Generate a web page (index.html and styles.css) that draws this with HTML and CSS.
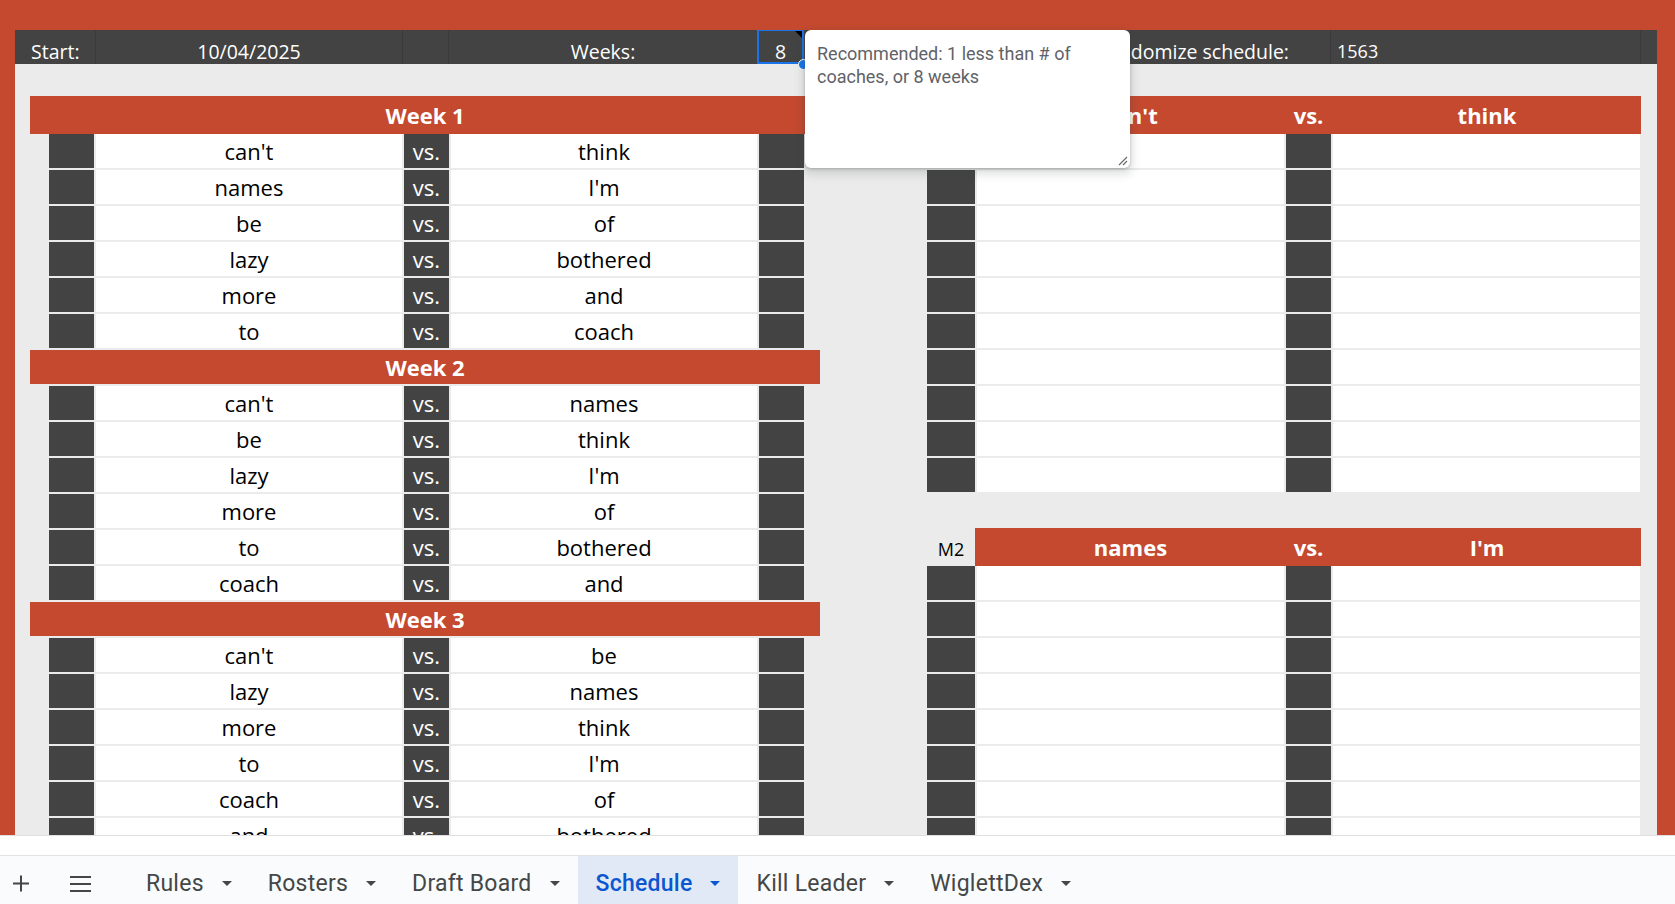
FILE: index.html
```html
<!DOCTYPE html>
<html>
<head>
<meta charset="utf-8">
<title>Schedule</title>
<link rel="stylesheet" href="styles.css">
</head>
<body>
<div class="app">
  <div class="frame">
    <div class="sheet">
      <div class="topbar">
        <div class="tcell c1">Start:</div>
        <div class="tcell c2">10/04/2025</div>
        <div class="tcell c3"></div>
        <div class="tcell c4">Weeks:</div>
        <div class="tcell c5">8<span class="sel-box"></span><span class="note-mark"></span><span class="handle"></span></div>
        <div class="tcell c6">Randomize schedule:</div>
        <div class="tcell c7">1563</div>
        <div class="tcell c8"></div>
      </div>
      <div class="content">
        <div class="left">
          <div class="week first">Week 1</div>
          <div class="row"><div class="cd"></div><div class="cw">can't</div><div class="cd vs">vs.</div><div class="cw">think</div><div class="cd"></div></div>
          <div class="row"><div class="cd"></div><div class="cw">names</div><div class="cd vs">vs.</div><div class="cw">I'm</div><div class="cd"></div></div>
          <div class="row"><div class="cd"></div><div class="cw">be</div><div class="cd vs">vs.</div><div class="cw">of</div><div class="cd"></div></div>
          <div class="row"><div class="cd"></div><div class="cw">lazy</div><div class="cd vs">vs.</div><div class="cw">bothered</div><div class="cd"></div></div>
          <div class="row"><div class="cd"></div><div class="cw">more</div><div class="cd vs">vs.</div><div class="cw">and</div><div class="cd"></div></div>
          <div class="row"><div class="cd"></div><div class="cw">to</div><div class="cd vs">vs.</div><div class="cw">coach</div><div class="cd"></div></div>
          <div class="week">Week 2</div>
          <div class="row"><div class="cd"></div><div class="cw">can't</div><div class="cd vs">vs.</div><div class="cw">names</div><div class="cd"></div></div>
          <div class="row"><div class="cd"></div><div class="cw">be</div><div class="cd vs">vs.</div><div class="cw">think</div><div class="cd"></div></div>
          <div class="row"><div class="cd"></div><div class="cw">lazy</div><div class="cd vs">vs.</div><div class="cw">I'm</div><div class="cd"></div></div>
          <div class="row"><div class="cd"></div><div class="cw">more</div><div class="cd vs">vs.</div><div class="cw">of</div><div class="cd"></div></div>
          <div class="row"><div class="cd"></div><div class="cw">to</div><div class="cd vs">vs.</div><div class="cw">bothered</div><div class="cd"></div></div>
          <div class="row"><div class="cd"></div><div class="cw">coach</div><div class="cd vs">vs.</div><div class="cw">and</div><div class="cd"></div></div>
          <div class="week">Week 3</div>
          <div class="row"><div class="cd"></div><div class="cw">can't</div><div class="cd vs">vs.</div><div class="cw">be</div><div class="cd"></div></div>
          <div class="row"><div class="cd"></div><div class="cw">lazy</div><div class="cd vs">vs.</div><div class="cw">names</div><div class="cd"></div></div>
          <div class="row"><div class="cd"></div><div class="cw">more</div><div class="cd vs">vs.</div><div class="cw">think</div><div class="cd"></div></div>
          <div class="row"><div class="cd"></div><div class="cw">to</div><div class="cd vs">vs.</div><div class="cw">I'm</div><div class="cd"></div></div>
          <div class="row"><div class="cd"></div><div class="cw">coach</div><div class="cd vs">vs.</div><div class="cw">of</div><div class="cd"></div></div>
          <div class="row"><div class="cd"></div><div class="cw">and</div><div class="cd vs">vs.</div><div class="cw">bothered</div><div class="cd"></div></div>
        </div>
        <div class="right">
          <div class="mhead"><div class="mlabel">M1</div><div class="mred"><span>can't</span><span>vs.</span><span>think</span></div></div>
          <div class="mrow"><div class="cd"></div><div class="cw"></div><div class="cd"></div><div class="cw"></div></div>
          <div class="mrow"><div class="cd"></div><div class="cw"></div><div class="cd"></div><div class="cw"></div></div>
          <div class="mrow"><div class="cd"></div><div class="cw"></div><div class="cd"></div><div class="cw"></div></div>
          <div class="mrow"><div class="cd"></div><div class="cw"></div><div class="cd"></div><div class="cw"></div></div>
          <div class="mrow"><div class="cd"></div><div class="cw"></div><div class="cd"></div><div class="cw"></div></div>
          <div class="mrow"><div class="cd"></div><div class="cw"></div><div class="cd"></div><div class="cw"></div></div>
          <div class="mrow"><div class="cd"></div><div class="cw"></div><div class="cd"></div><div class="cw"></div></div>
          <div class="mrow"><div class="cd"></div><div class="cw"></div><div class="cd"></div><div class="cw"></div></div>
          <div class="mrow"><div class="cd"></div><div class="cw"></div><div class="cd"></div><div class="cw"></div></div>
          <div class="mrow"><div class="cd"></div><div class="cw"></div><div class="cd"></div><div class="cw"></div></div>
          <div class="spacer"></div>
          <div class="mhead"><div class="mlabel">M2</div><div class="mred"><span>names</span><span>vs.</span><span>I'm</span></div></div>
          <div class="mrow"><div class="cd"></div><div class="cw"></div><div class="cd"></div><div class="cw"></div></div>
          <div class="mrow"><div class="cd"></div><div class="cw"></div><div class="cd"></div><div class="cw"></div></div>
          <div class="mrow"><div class="cd"></div><div class="cw"></div><div class="cd"></div><div class="cw"></div></div>
          <div class="mrow"><div class="cd"></div><div class="cw"></div><div class="cd"></div><div class="cw"></div></div>
          <div class="mrow"><div class="cd"></div><div class="cw"></div><div class="cd"></div><div class="cw"></div></div>
          <div class="mrow"><div class="cd"></div><div class="cw"></div><div class="cd"></div><div class="cw"></div></div>
          <div class="mrow"><div class="cd"></div><div class="cw"></div><div class="cd"></div><div class="cw"></div></div>
          <div class="mrow"><div class="cd"></div><div class="cw"></div><div class="cd"></div><div class="cw"></div></div>
        </div>
      </div>
    </div>
    <div class="note">Recommended: 1 less than # of<br>coaches, or 8 weeks<svg class="grip" width="12" height="12" viewBox="0 0 12 12"><path d="M11 3 L3 11 M11 7 L7 11" stroke="#6b6b6b" stroke-width="1.2" fill="none"/></svg></div>
  </div>
  <div class="strip"></div>
  <div class="tabbar">
    <div class="tb-icon plus"><svg width="16" height="17" viewBox="0 0 16 17"><path d="M8 0.5 V16.5 M0 8.5 H16" stroke="#444746" stroke-width="2" fill="none"/></svg></div>
    <div class="tb-icon menu"><svg width="24" height="16" viewBox="0 0 24 16"><path d="M2 1 H23 M2 8 H23 M2 15 H23" stroke="#444746" stroke-width="2" fill="none"/></svg></div>
    <div class="tabs">
      <div class="tab">Rules<svg class="arr" width="10" height="5" viewBox="0 0 10 5"><polygon points="0,0 10,0 5,5" fill="currentColor"/></svg></div>
      <div class="tab">Rosters<svg class="arr" width="10" height="5" viewBox="0 0 10 5"><polygon points="0,0 10,0 5,5" fill="currentColor"/></svg></div>
      <div class="tab">Draft Board<svg class="arr" width="10" height="5" viewBox="0 0 10 5"><polygon points="0,0 10,0 5,5" fill="currentColor"/></svg></div>
      <div class="tab active">Schedule<svg class="arr" width="10" height="5" viewBox="0 0 10 5"><polygon points="0,0 10,0 5,5" fill="currentColor"/></svg></div>
      <div class="tab">Kill Leader<svg class="arr" width="10" height="5" viewBox="0 0 10 5"><polygon points="0,0 10,0 5,5" fill="currentColor"/></svg></div>
      <div class="tab">WiglettDex<svg class="arr" width="10" height="5" viewBox="0 0 10 5"><polygon points="0,0 10,0 5,5" fill="currentColor"/></svg></div>
    </div>
  </div>
</div>
</body>
</html>
```

FILE: styles.css
```css
* { box-sizing: border-box; }
html, body { margin: 0; padding: 0; }
body {
  width: 1675px;
  height: 904px;
  overflow: hidden;
  background: #ffffff;
  font-family: "Open Sans", "DejaVu Sans", sans-serif;
}
.app { display: flex; flex-direction: column; height: 904px; }

.frame {
  position: relative;
  height: 835px;
  flex: none;
  background: #c4492f;
  padding: 30px 18px 0 15px;
}
.sheet {
  height: 805px;
  background: #ebebeb;
  overflow: hidden;
  display: flex;
  flex-direction: column;
}

/* top dark bar */
.topbar {
  display: grid;
  grid-template-columns: 81px 307px 46px 309px 46px 527px 310px 16px;
  height: 34px;
  flex: none;
  background: #434343;
  position: relative;
  z-index: 2;
}
.tcell {
  position: relative;
  border-right: 1px solid #3a3a3a;
  color: #ffffff;
  font-size: 19.5px;
  line-height: 24px;
  display: flex;
  align-items: flex-end;
  justify-content: center;
  white-space: nowrap;
}
.c1 { justify-content: flex-start; padding-left: 16px; }
.c6 { justify-content: flex-end; padding-right: 41px; }
.c7 { justify-content: flex-start; padding-left: 6px; font-size: 18px; padding-bottom: 1px; }
.c8 { border-right: none; }
.sel-box {
  position: absolute;
  left: -1px; top: -1px; right: -1px; bottom: 0;
  border: 2px solid #1a73e8;
}
.note-mark {
  position: absolute;
  top: 1px; right: 1px;
  width: 0; height: 0;
  border-top: 7px solid #000;
  border-left: 7px solid transparent;
}
.handle {
  position: absolute;
  right: -6px; bottom: -6px;
  width: 11px; height: 11px;
  border-radius: 50%;
  background: #1a73e8;
  border: 1px solid #ffffff;
}

/* content */
.content { display: flex; padding-top: 32px; flex: 1; }
.left { width: 790px; margin-left: 15px; display: flex; flex-direction: column; flex: none; }
.right { width: 714px; margin-left: 107px; display: flex; flex-direction: column; flex: none; }

.week {
  height: 34px;
  margin-bottom: 2px;
  flex: none;
  background: #c4492f;
  color: #ffffff;
  font-weight: 700;
  font-size: 22px;
  line-height: 30px;
  display: flex;
  align-items: flex-end;
  justify-content: center;
  padding-bottom: 2px;
}
.week.first { height: 38px; margin-bottom: 0; padding-bottom: 4px; }

.row {
  display: grid;
  grid-template-columns: 45px 306px 45px 306px 45px;
  column-gap: 2px;
  height: 34px;
  margin-bottom: 2px;
  margin-left: 19px;
  flex: none;
}
.row > div, .mrow > div {
  font-size: 22px;
  line-height: 30px;
  display: flex;
  align-items: flex-end;
  justify-content: center;
  padding-bottom: 2px;
  color: #000000;
  white-space: nowrap;
}
.cd { background: #434343; }
.cw { background: #ffffff; }
.row > .vs { color: #ffffff; }

.mhead { display: grid; grid-template-columns: 48px 1fr; height: 38px; flex: none; }
.mlabel {
  font-size: 18px;
  line-height: 24px;
  color: #000000;
  display: flex;
  align-items: flex-end;
  justify-content: center;
  padding-bottom: 5px;
}
.mred {
  background: #c4492f;
  display: grid;
  grid-template-columns: 307px 45px 308px;
  column-gap: 2px;
  padding-left: 2px;
  color: #ffffff;
  font-weight: 700;
  font-size: 22px;
  line-height: 30px;
}
.mred span { display: flex; align-items: flex-end; justify-content: center; padding-bottom: 4px; white-space: nowrap; }
.mrow {
  display: grid;
  grid-template-columns: 48px 307px 45px 307px;
  column-gap: 2px;
  height: 34px;
  margin-bottom: 2px;
  flex: none;
}
.spacer { height: 34px; flex: none; }

/* note popup */
.note {
  position: absolute;
  left: 805px;
  top: 30px;
  width: 325px;
  height: 138px;
  background: #ffffff;
  border-radius: 6px;
  box-shadow: 0 1px 3px rgba(60, 64, 67, 0.3), 0 4px 8px 3px rgba(60, 64, 67, 0.15);
  padding: 12px;
  font-family: Roboto, "Liberation Sans", sans-serif;
  font-size: 18px;
  line-height: 23px;
  color: #5f6368;
  z-index: 5;
}
.grip { position: absolute; right: 2px; bottom: 2px; }

/* bottom */
.strip { height: 20px; flex: none; border-top: 1px solid #e0e0e0; background: #ffffff; }
.tabbar {
  height: 49px;
  flex: none;
  border-top: 1px solid #e1e3e6;
  background: #f9fbfd;
  display: flex;
  align-items: stretch;
  padding-left: 13px;
  font-family: Roboto, "Liberation Sans", sans-serif;
}
.tb-icon { display: flex; align-items: center; padding-top: 7px; flex: none; }
.plus { width: 16px; }
.menu { width: 24px; margin-left: 39px; }
.tabs { display: flex; margin-left: 36px; }
.tab {
  display: flex;
  align-items: center;
  padding: 6px 18px 0 18px;
  font-size: 23px;
  letter-spacing: 0.25px;
  color: #444746;
  white-space: nowrap;
}
.tab .arr { margin-left: 18px; flex: none; }
.tab.active { background: #e1e9f7; color: #0b57d0; font-weight: 500; }
```
